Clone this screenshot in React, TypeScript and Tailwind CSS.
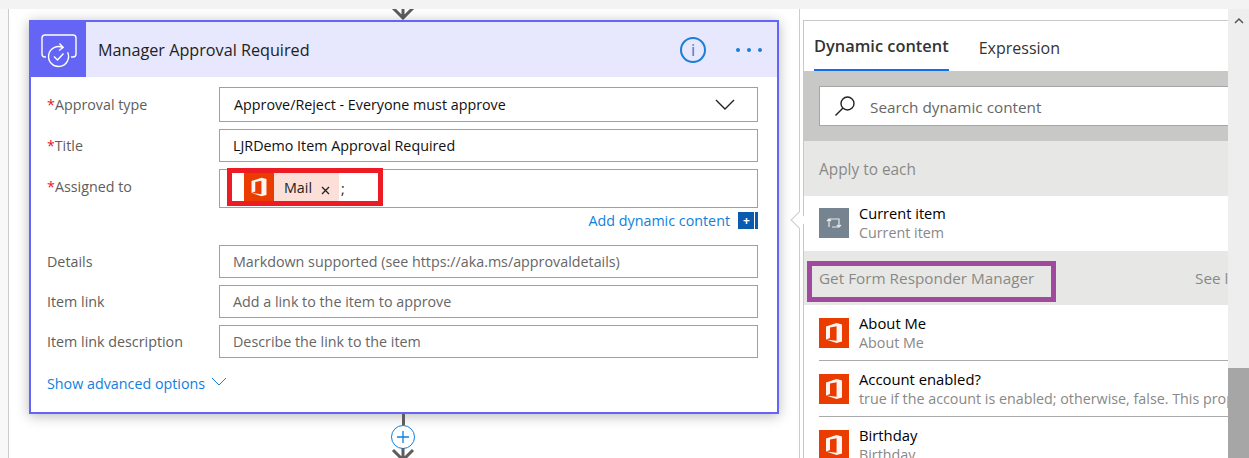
function OfficeIcon({ className }: { className: string }) {
    return (
        <div className={`bg-[#eb3c00] flex items-center justify-center shrink-0 ${className}`}>
            <svg viewBox="0 0 30 30" className="w-full h-full">
                <path fill="#fff" fillRule="evenodd" d="M7 8.6 17.6 5 23 6.4V23.6L17.6 25 7 21.4 17.6 22.8V8.2L11 9.6V19.9L7 21.4Z" opacity="0.95" />
            </svg>
        </div>
    );
}

function FlowArrow() {
    return (
        <svg width="26" height="14" viewBox="0 0 26 14" className="block">
            <path d="M13 0V12M3 2 13 12 23 2" fill="none" stroke="#5d5d5d" strokeWidth="3" />
        </svg>
    );
}

function Field({ label, required, hint, value, h, mt }: { label: string; required?: boolean; hint?: string; value?: string; h: string; mt: string }) {
    return (
        <div className={`flex ${mt}`}>
            <div className="w-[172px] shrink-0 pl-0 flex items-center text-[#605e5c] h-[33px]">
                {required && <span className="text-[#e81123] text-[14px]">*</span>}
                {label}
            </div>
            <div className={`flex-1 border border-[#a0a0a0] flex items-center pl-[13px] ${h} ${value ? 'text-[#111]' : 'text-[#666]'}`}>
                {value || hint}
            </div>
        </div>
    );
}

function ContentRow({ title, sub, divider }: { title: string; sub: string; divider?: boolean }) {
    return (
        <div className="h-[56px] pl-[15px] pt-[13px] relative shrink-0">
            <div className="flex gap-[10px]">
                <OfficeIcon className="w-[30px] h-[30px]" />
                <div className="leading-[20px] -mt-[5px] whitespace-nowrap">
                    <div className="text-black font-medium text-[14.800px]">{title}</div>
                    <div className="text-[#8a8886] text-[14.300px]">{sub}</div>
                </div>
            </div>
            {divider && <div className="absolute left-[15px] right-0 bottom-0 h-px bg-[#aaa]" />}
        </div>
    );
}

export default function App() {
    return (
        <div className="w-[1249px] h-[458px] overflow-hidden bg-white flex flex-col text-[14.300px] font-['Open_Sans','Noto_Sans',sans-serif]">
            <div className="h-[9px] bg-[#f3f3f3] shrink-0" />
            <div className="flex flex-1 min-h-0">
                <div className="w-[9px] bg-[#f8f8f8] border-r border-[#ccc] shrink-0" />

                {/* flow canvas */}
                <div className="w-[791px] shrink-0 border-r border-[#ccc] pl-[20px] flex flex-col">
                    <div className="w-[750px] h-[11px] pr-[2px] flex justify-center overflow-hidden shrink-0">
                        <div className="-mt-[3px]"><FlowArrow /></div>
                    </div>
                    <div className="w-[750px] h-[394px] border-2 border-[#6464f5] shadow-[0_2px_12px_rgba(0,0,0,0.28)] bg-white shrink-0">
                        <div className="h-[55px] bg-[#e7e7fd] flex items-center">
                            <div className="w-[55px] h-[55px] bg-[#6464f5] flex items-center justify-center">
                                <svg width="38" height="36" viewBox="0 0 38 36" fill="none" stroke="#fff" strokeWidth="1.4">
                                    <path d="M6 25H5Q2 25 2 22V6Q2 3 5 3H33Q36 3 36 6V22Q36 25 33 25H31" />
                                    <circle cx="18.500" cy="24.500" r="10" stroke="#6464f5" strokeWidth="4" />
                                    <path d="M23 15.570A10 10 0 1 0 27.600 20.300" />
                                    <path d="M19.500 11.500 23.200 15.500 19 18.500" />
                                    <path d="M14 24.500 17.500 28 23.500 21.500" />
                                </svg>
                            </div>
                            <div className="ml-[12px] mt-[2px] text-[16.200px] text-[#222] flex-1">Manager Approval Required</div>
                            <div className="w-[26px] h-[26px] rounded-full border-2 border-[#1a7fd6] text-[#1a7fd6] flex items-center justify-center text-[16px] leading-none mr-[30px]">i</div>
                            <div className="flex gap-[7px] mr-[15px]">
                                <div className="w-[4px] h-[4px] rounded-full bg-[#1a7fd6]" />
                                <div className="w-[4px] h-[4px] rounded-full bg-[#1a7fd6]" />
                                <div className="w-[4px] h-[4px] rounded-full bg-[#1a7fd6]" />
                            </div>
                        </div>
                        <div className="pl-[16px] pr-[19px] pt-[10px]">
                            <div className="flex">
                                <div className="w-[172px] shrink-0 flex items-center text-[#605e5c] h-[35px]">
                                    <span className="text-[#e81123]">*</span>Approval type
                                </div>
                                <div className="flex-1 h-[35px] border border-[#a0a0a0] flex items-center justify-between pl-[14px] pr-[22px] text-[#111]">
                                    Approve/Reject - Everyone must approve
                                    <svg width="20" height="12" viewBox="0 0 20 12" fill="none" stroke="#222" strokeWidth="1.4"><path d="M1 1 10 10 19 1" /></svg>
                                </div>
                            </div>
                            <Field label="Title" required value="LJRDemo Item Approval Required" h="h-[33px]" mt="mt-[7px]" />
                            <div className="flex mt-[7px]">
                                <div className="w-[172px] shrink-0 flex items-start text-[#605e5c] pt-[7px]">
                                    <span className="text-[#e81123]">*</span>Assigned to
                                </div>
                                <div className="flex-1 h-[39px] border border-[#a0a0a0] relative">
                                    {/* red annotation around the token */}
                                    <div className="absolute left-[7px] top-[-2px] h-[38px] w-[156px] border-[5px] border-[#ed1c24] bg-white flex items-center pl-[12px] text-[#222]">
                                        <OfficeIcon className="w-[30px] h-[28px]" />
                                        <div className="w-[65px] h-[28px] bg-[#fce0d7] flex items-center pl-[10px] pt-[2px]">
                                            Mail
                                            <svg width="9" height="9" viewBox="0 0 9 9" stroke="#222" strokeWidth="1.300" className="ml-[9px] mt-[4px]"><path d="M1 1 8 8M8 1 1 8" /></svg>
                                        </div>
                                        <span className="ml-[2px] mt-[4px]">;</span>
                                    </div>
                                </div>
                            </div>
                            <div className="flex justify-end items-center h-[25px] text-[#0f7fe0]">
                                Add dynamic content
                                <div className="ml-[8px] w-[20px] h-[17px] bg-[#0a5bb0] text-white flex items-center justify-start pl-[5px] text-[12px] font-bold leading-none relative">
                                    +
                                    <div className="absolute right-[3px] top-0 bottom-0 w-px bg-white" />
                                </div>
                            </div>
                            <Field label="Details" hint="Markdown supported (see https://aka.ms/approvaldetails)" h="h-[33px]" mt="mt-[12px]" />
                            <Field label="Item link" hint="Add a link to the item to approve" h="h-[33px]" mt="mt-[7px]" />
                            <Field label="Item link description" hint="Describe the link to the item" h="h-[33px]" mt="mt-[7px]" />
                            <div className="flex items-center text-[#0f7fe0] mt-[15px]">
                                Show advanced options
                                <svg width="16" height="10" viewBox="0 0 16 10" fill="none" stroke="#0f7fe0" strokeWidth="1" className="ml-[6px] -mt-[3px]"><path d="M1 1 8 8 15 1" /></svg>
                            </div>
                        </div>
                    </div>
                    <div className="w-[750px] pr-[2px] flex flex-col items-center shrink-0">
                        <div className="w-[3px] h-[11px] bg-[#5d5d5d] shrink-0" />
                        <div className="w-[24px] h-[24px] rounded-full border border-[#0f7fe0] text-[#0f7fe0] flex items-center justify-center bg-white shrink-0">
                            <svg width="14" height="14" viewBox="0 0 14 14" stroke="#0f7fe0" strokeWidth="1.300"><path d="M7 1V13M1 7H13" /></svg>
                        </div>
                        <div className="-mt-[1px]"><FlowArrow /></div>
                    </div>
                </div>

                {/* dynamic content panel */}
                <div className="flex-1 min-w-0 pl-[3px] pt-[11px] relative">
                    <div className="absolute left-[-7px] top-[205px] w-[12px] h-[12px] rotate-45 bg-white border-l border-b border-[#ccc] z-10" />
                    <div className="w-[425px] h-[438px] border-l border-t border-[#c8c8c8] bg-white overflow-hidden flex flex-col relative">
                        <div className="h-[50px] flex gap-[30px] pl-[10px] text-[16px] shrink-0">
                            <div className="h-[50px] flex items-center pt-[3px] font-semibold text-[#333] border-b-2 border-[#0f6fec] text-[16.400px]">Dynamic content</div>
                            <div className="h-[50px] flex items-center pt-[3px] text-[#333]">Expression</div>
                        </div>
                        <div className="h-[70px] bg-[#c8c9c6] pt-[15px] pl-[15px] shrink-0">
                            <div className="w-[420px] h-[40px] bg-white border border-[#a6a6a6] flex items-center pl-[14px] text-[#666] text-[15.300px]">
                                <svg width="22" height="22" viewBox="0 0 22 22" fill="none" stroke="#222" strokeWidth="1.400" className="mr-[14px]">
                                    <circle cx="13.500" cy="8.500" r="6.500" /><path d="M9 13 1.500 20.500" />
                                </svg>
                                <span className="mt-[3px]">Search dynamic content</span>
                            </div>
                        </div>
                        <div className="h-[55px] bg-[#e7e8e6] flex items-center pl-[15px] pt-[2px] text-[#8a8886] text-[15.400px] shrink-0">Apply to each</div>
                        <div className="h-[55px] pl-[15px] pt-[12px] flex gap-[10px] shrink-0">
                            <div className="w-[30px] h-[30px] bg-[#768391] flex items-center justify-center">
                                <svg width="16" height="14" viewBox="0 0 16 14" fill="none" stroke="#e6e9ec" strokeWidth="1.200">
                                    <path d="M3 11V3H13V11H6M1 5 3 3 5 5M11 9 13 11 15 9" />
                                </svg>
                            </div>
                            <div className="leading-[20px] -mt-[5px]">
                                <div className="text-black font-medium text-[14.600px]">Current item</div>
                                <div className="text-[#8a8886]">Current item</div>
                            </div>
                        </div>
                        <div className="h-[54px] bg-[#e7e8e6] flex items-center justify-between pl-[15px] text-[#8a8886] text-[15.300px] shrink-0 relative">
                            Get Form Responder Manager
                            <span className="absolute left-[391px] top-[16px] whitespace-nowrap">See less</span>
                            {/* purple annotation around the heading */}
                            <div className="absolute left-[3px] top-[10px] w-[249px] h-[41px] border-[5px] border-[#a04a9f]" />
                        </div>
                        <ContentRow title="About Me" sub="About Me" divider />
                        <ContentRow title="Account enabled?" sub="true if the account is enabled; otherwise, false. This property is required when a user is created." divider />
                        <ContentRow title="Birthday" sub="Birthday" />
                    </div>
                </div>
            </div>

            {/* page scrollbar */}
            <div className="absolute left-[1228px] top-[9px] w-[21px] h-[449px] bg-[#eeeeee] flex flex-col items-center">
                <svg width="10" height="7" viewBox="0 0 10 7" fill="none" stroke="#555" strokeWidth="1.500" className="mt-[8px]"><path d="M1 6 5 2 9 6" /></svg>
                <div className="absolute left-0 right-0 top-[359px] bottom-0 bg-[#a6a6a6]" />
            </div>
        </div>
    );
}
